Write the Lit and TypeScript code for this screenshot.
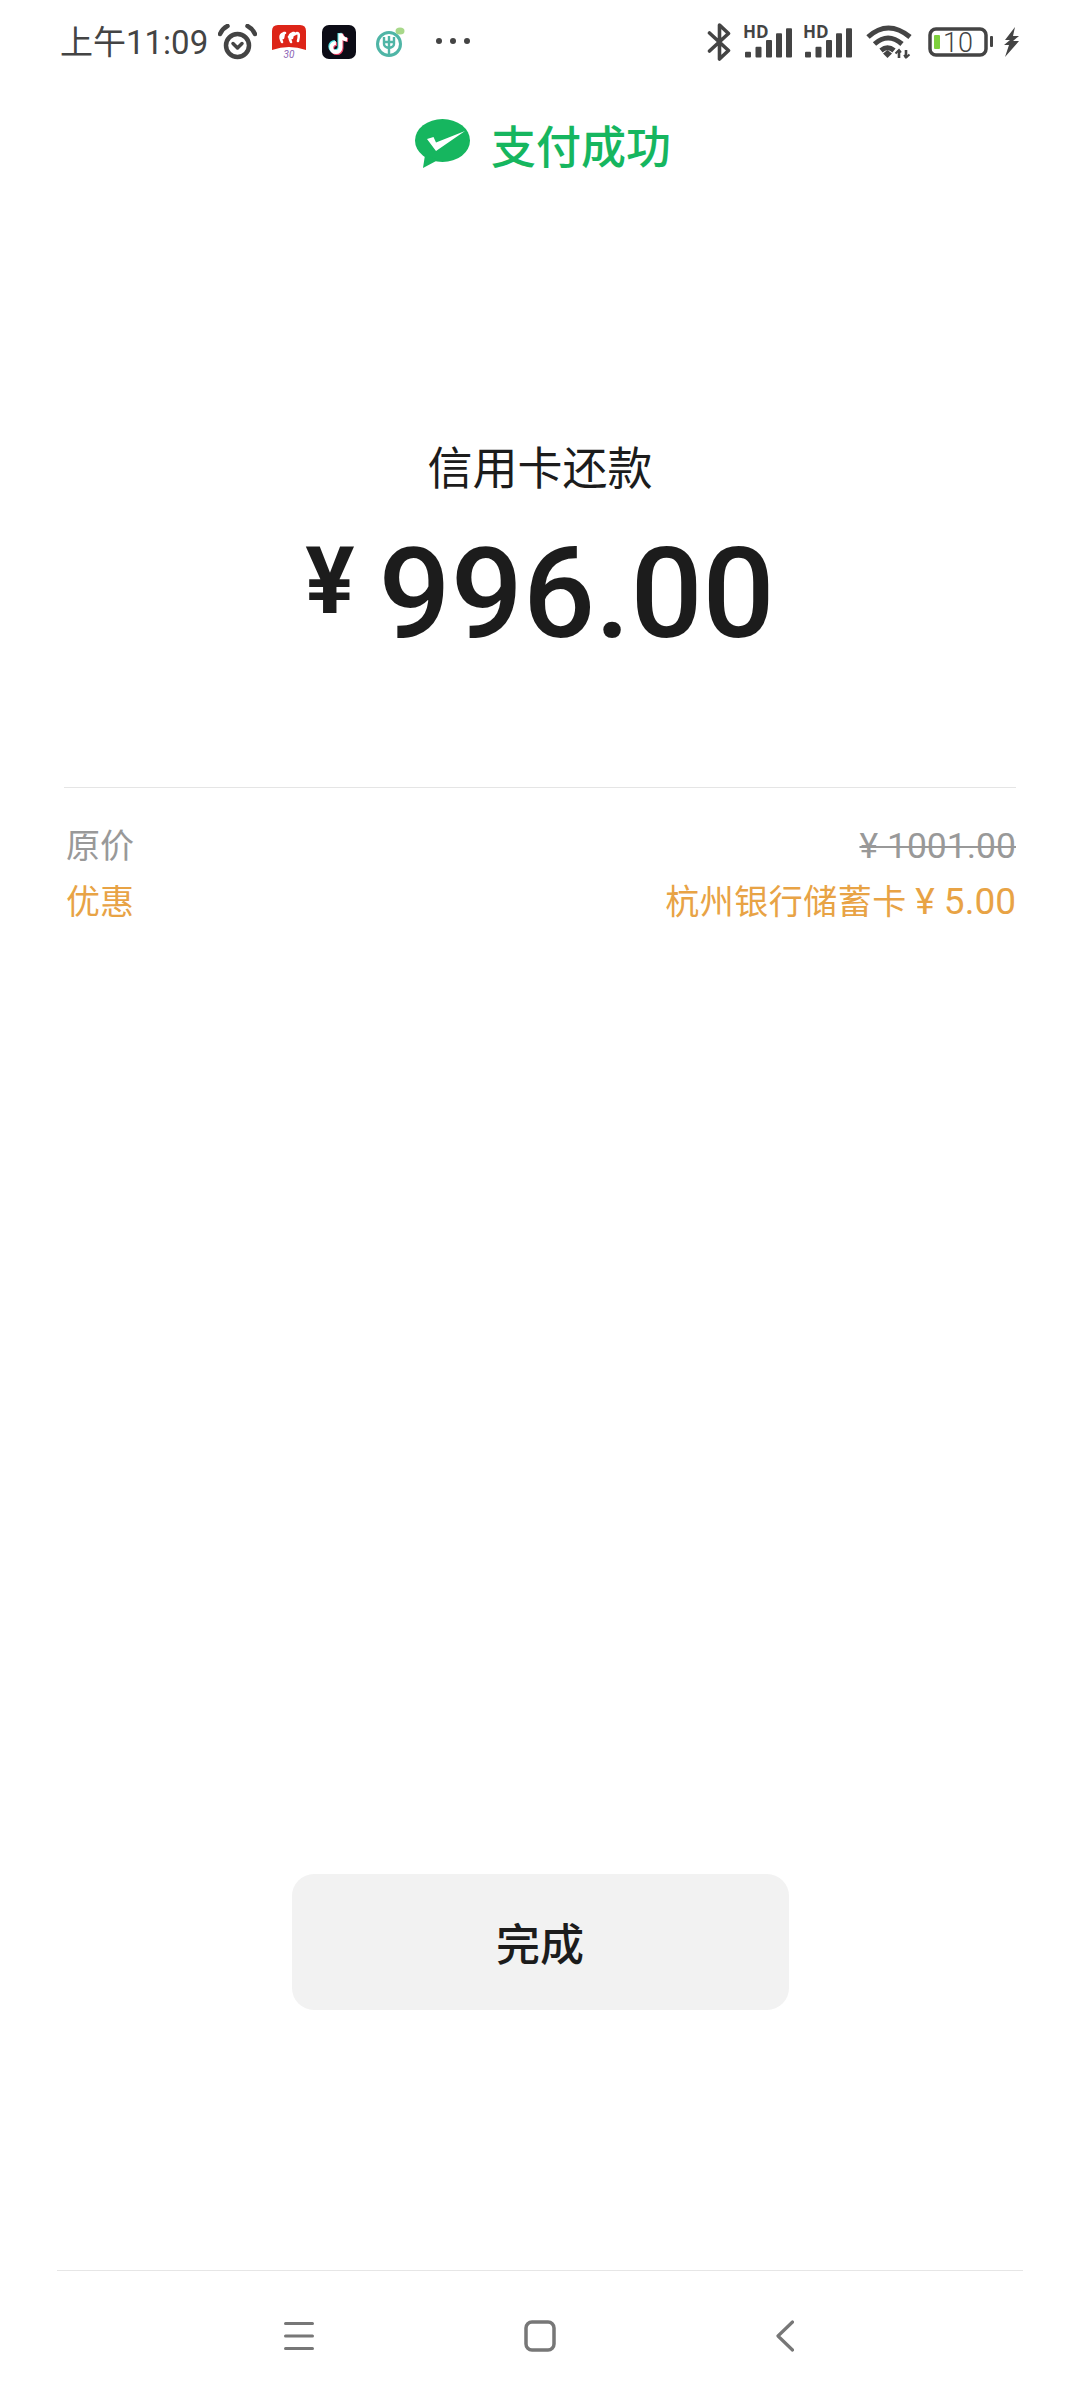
import { LitElement, html, css, svg } from "lit";
import { customElement } from "lit/decorators.js";

const signal = () => html`<svg width="49" height="54" viewBox="0 -10 49 54">
  <text x="0" y="13" class="hd">HD</text>
  ${[
    [2, 26.7],
    [12.5, 21.7],
    [23, 15],
    [33, 8.3],
    [43, 3.3],
  ].map(([x, y]) => svg`<rect x=${x} y=${y} width="6" height=${32.5 - y} rx="1" fill="#444"></rect>`)}
</svg>`;

@customElement("app-root")
export class AppRoot extends LitElement {
  static styles = css`
    :host {
      display: block;
      font-family: Roboto, "Noto Sans CJK SC", sans-serif;
      background: #fff;
    }
    .page {
      display: flex;
      flex-direction: column;
      height: 2400px;
      background: #fff;
    }
    .status {
      display: flex;
      justify-content: space-between;
      align-items: center;
      height: 84px;
      padding: 0 60px;
      color: #444;
    }
    .status-left,
    .status-right {
      display: flex;
      align-items: center;
    }
    .status-left {
      gap: 15px;
    }
    .status-right {
      gap: 11px;
    }
    .time {
      font-size: 33px;
      line-height: 44px;
      padding-top: 2px;
      width: 148px;
      white-space: nowrap;
    }
    .alarm {
      margin-left: -5px;
      margin-top: -1px;
    }
    .tiktok {
      margin-left: 1px;
    }
    .bank {
      margin-left: 4px;
    }
    .dots {
      margin-left: 15px;
      margin-top: -2px;
    }
    .wifi {
      margin-left: 3px;
    }
    .battery {
      margin-left: 5px;
    }
    .hd {
      font: 700 17px "Open Sans", sans-serif;
      fill: #444;
    }
    .battery-num {
      font: 300 27px Roboto, sans-serif;
      fill: #444;
    }
    .result {
      display: flex;
      justify-content: center;
      align-items: center;
      gap: 21px;
      margin-top: 31px;
      padding-left: 6px;
      height: 58px;
    }
    .result-text {
      font-size: 45px;
      font-weight: 500;
      color: #16b65f;
    }
    .label {
      margin-top: 267px;
      height: 60px;
      line-height: 60px;
      font-size: 45px;
      text-align: center;
      color: #1c1c1c;
    }
    .amount {
      height: 150px;
      line-height: 150px;
      margin-top: 19px;
      margin-bottom: 3px;
      text-align: center;
      white-space: nowrap;
      color: #1c1c1c;
    }
    .yen {
      margin-right: 24px;
      font-size: 92px;
      font-weight: 700;
      line-height: 0;
      vertical-align: 24px;
    }
    .num {
      font-size: 127px;
      font-weight: 500;
    }
    .divider {
      height: 1px;
      margin: 115px 64px 0;
      background: #e5e5e5;
    }
    .rows {
      margin: 30px 64px 0 66px;
    }
    .row {
      display: flex;
      justify-content: space-between;
      height: 56px;
      line-height: 56px;
      font-size: 34px;
    }
    .muted {
      color: #999;
    }
    .muted .money {
      font-size: 35.5px;
      text-decoration: line-through;
      text-decoration-thickness: 2px;
    }
    .discount {
      color: #e8a345;
    }
    .bank-name {
      letter-spacing: 0.5px;
    }
    .discount .money {
      font-size: 37px;
    }
    .done {
      align-self: center;
      display: flex;
      justify-content: center;
      align-items: center;
      width: 497px;
      height: 136px;
      margin-top: auto;
      margin-bottom: 260px;
      border-radius: 22px;
      background: #f2f2f2;
      font-size: 44px;
      font-weight: 500;
      color: #1c1c1c;
    }
    .nav {
      display: flex;
      justify-content: center;
      align-items: center;
      gap: 210px;
      height: 129px;
      margin: 0 57px;
      padding-right: 2px;
      border-top: 1px solid #e6e6e6;
    }
    .back {
      margin-left: 10px;
    }
  `;

  render() {
    return html`
      <div class="page">
        <div class="status">
          <div class="status-left">
            <span class="time">上午11:09</span>
            <svg class="alarm" width="39" height="36" viewBox="0 0 39 36" fill="none" stroke="#444" stroke-width="4.5" stroke-linecap="round" stroke-linejoin="round">
              <circle cx="19.5" cy="21.5" r="11.5"></circle>
              <path d="M2 10Q4.5 4.5 9.5 2M29.5 2Q34.5 4.5 37 10"></path>
              <path d="M15 19.5L19.5 24L24 19.5" stroke-width="3.5"></path>
            </svg>
            <svg width="34" height="34" viewBox="0 0 34 34">
              <path d="M6 0H28Q34 0 34 6V25Q17 19 0 25V6Q0 0 6 0Z" fill="#dd2418"></path>
              <path d="M10 17Q6 9 13 8M12 8L11 13M19 17Q15 9 22 8M21 8L20 13M17 12L25 8Q28 8 26 16" fill="none" stroke="#fff" stroke-width="2.6" stroke-linecap="round"></path>
              <text x="17" y="33" text-anchor="middle" font-size="10" font-style="italic" fill="#8b63b5">30</text>
            </svg>
            <svg class="tiktok" width="34" height="34" viewBox="0 0 34 34" fill="none" stroke-width="4">
              <rect width="34" height="34" rx="7" fill="#0c0c16"></rect>
              <path d="M17.5 8V21.5A4.6 4.6 0 1 1 12.9 16.9M17.5 8Q18.5 13.5 24 14" stroke="#4fe3e6"></path>
              <path d="M19.5 9V23.5A4.6 4.6 0 1 1 14.9 18.9M19.5 9Q20.5 14.5 26 15" stroke="#f2446a"></path>
              <path d="M18.5 8.5V22.5A4.6 4.6 0 1 1 13.9 17.9M18.5 8.5Q19.5 14 25 14.5" stroke="#fff"></path>
            </svg>
            <svg class="bank" width="30" height="34" viewBox="0 0 30 34" fill="none" stroke="#4fb5a6">
              <circle cx="14" cy="19" r="11.5" stroke-width="3"></circle>
              <path d="M9 12V19Q9 22 14 23Q19 22 19 19V12M14 11V30M10 17H18" stroke-width="2.4"></path>
              <ellipse cx="25" cy="6" rx="4.5" ry="3.5" fill="#a8d88a" stroke="none"></ellipse>
            </svg>
            <svg class="dots" width="36" height="8" viewBox="0 0 36 8" fill="#444">
              <circle cx="4" cy="4" r="3"></circle>
              <circle cx="18" cy="4" r="3"></circle>
              <circle cx="32" cy="4" r="3"></circle>
            </svg>
          </div>
          <div class="status-right">
            <svg width="25" height="38" viewBox="0 0 25 38" fill="none" stroke="#444" stroke-width="3.6" stroke-linecap="round" stroke-linejoin="round">
              <path d="M2.5 10L21.5 27.5L12.5 36V2L21.5 10.5L2.5 28"></path>
            </svg>
            ${signal()} ${signal()}
            <svg class="wifi" width="46" height="34" viewBox="0 0 46 34" fill="none" stroke="#444" stroke-width="5">
              <path d="M2 12Q22 -6 44 12M8.5 19Q22 7 36 19M15 25.5Q21.5 20 28 25.5"></path>
              <path d="M17 28.5L21.5 25L26 28.5L21.5 33Z" fill="#444" stroke="none"></path>
              <path d="M33 25V33M40 25V33" stroke-width="2.6"></path>
              <path d="M29.5 28.5L33 25L35 27.5M38 30L40 32.5L43.5 29.5" stroke-width="2"></path>
            </svg>
            <svg class="battery" width="65" height="36" viewBox="0 -3 65 36">
              <rect x="2" y="2" width="56" height="26" rx="6" fill="none" stroke="#444" stroke-width="3.5"></rect>
              <rect x="6" y="8" width="6" height="14" rx="1" fill="#7ed03e"></rect>
              <text x="30" y="25" text-anchor="middle" class="battery-num">10</text>
              <rect x="62" y="9" width="3" height="11" rx="1" fill="#444"></rect>
            </svg>
            <svg width="16" height="30" viewBox="0 0 16 30" fill="#444">
              <path d="M11 0L1 13H6L0 18H5L1 30L15 14H9L15 9H9Z"></path>
            </svg>
          </div>
        </div>

        <div class="result">
          <svg width="55" height="50" viewBox="0 0 55 50">
            <ellipse cx="27.5" cy="21.5" rx="27.5" ry="21.5" fill="#16b65f"></ellipse>
            <path d="M10 36L8 49L23 41Z" fill="#16b65f"></path>
            <path d="M12 20L18.5 18L21 23.5L50 12L21 32Z" fill="#fff"></path>
          </svg>
          <span class="result-text">支付成功</span>
        </div>

        <div class="label">信用卡还款</div>
        <div class="amount"><span class="yen">¥</span><span class="num">996.00</span></div>

        <div class="divider"></div>
        <div class="rows">
          <div class="row muted">
            <span>原价</span>
            <span class="money">¥ 1001.00</span>
          </div>
          <div class="row discount">
            <span>优惠</span>
            <span><span class="bank-name">杭州银行储蓄卡</span> <span class="money">¥ 5.00</span></span>
          </div>
        </div>

        <div class="done">完成</div>

        <div class="nav">
          <svg width="30" height="30" viewBox="0 0 30 30" stroke="#777" stroke-width="3" stroke-linecap="round">
            <path d="M1.5 2.5H28.5M1.5 15H28.5M1.5 27.5H28.5"></path>
          </svg>
          <svg width="32" height="32" viewBox="0 0 32 32" fill="none" stroke="#777" stroke-width="3.5">
            <rect x="2" y="2" width="28" height="28" rx="6"></rect>
          </svg>
          <svg class="back" width="18" height="32" viewBox="0 0 18 32" fill="none" stroke="#777" stroke-width="3.2" stroke-linecap="round" stroke-linejoin="round">
            <path d="M16.5 2L2 16L16.5 30"></path>
          </svg>
        </div>
      </div>
    `;
  }
}
